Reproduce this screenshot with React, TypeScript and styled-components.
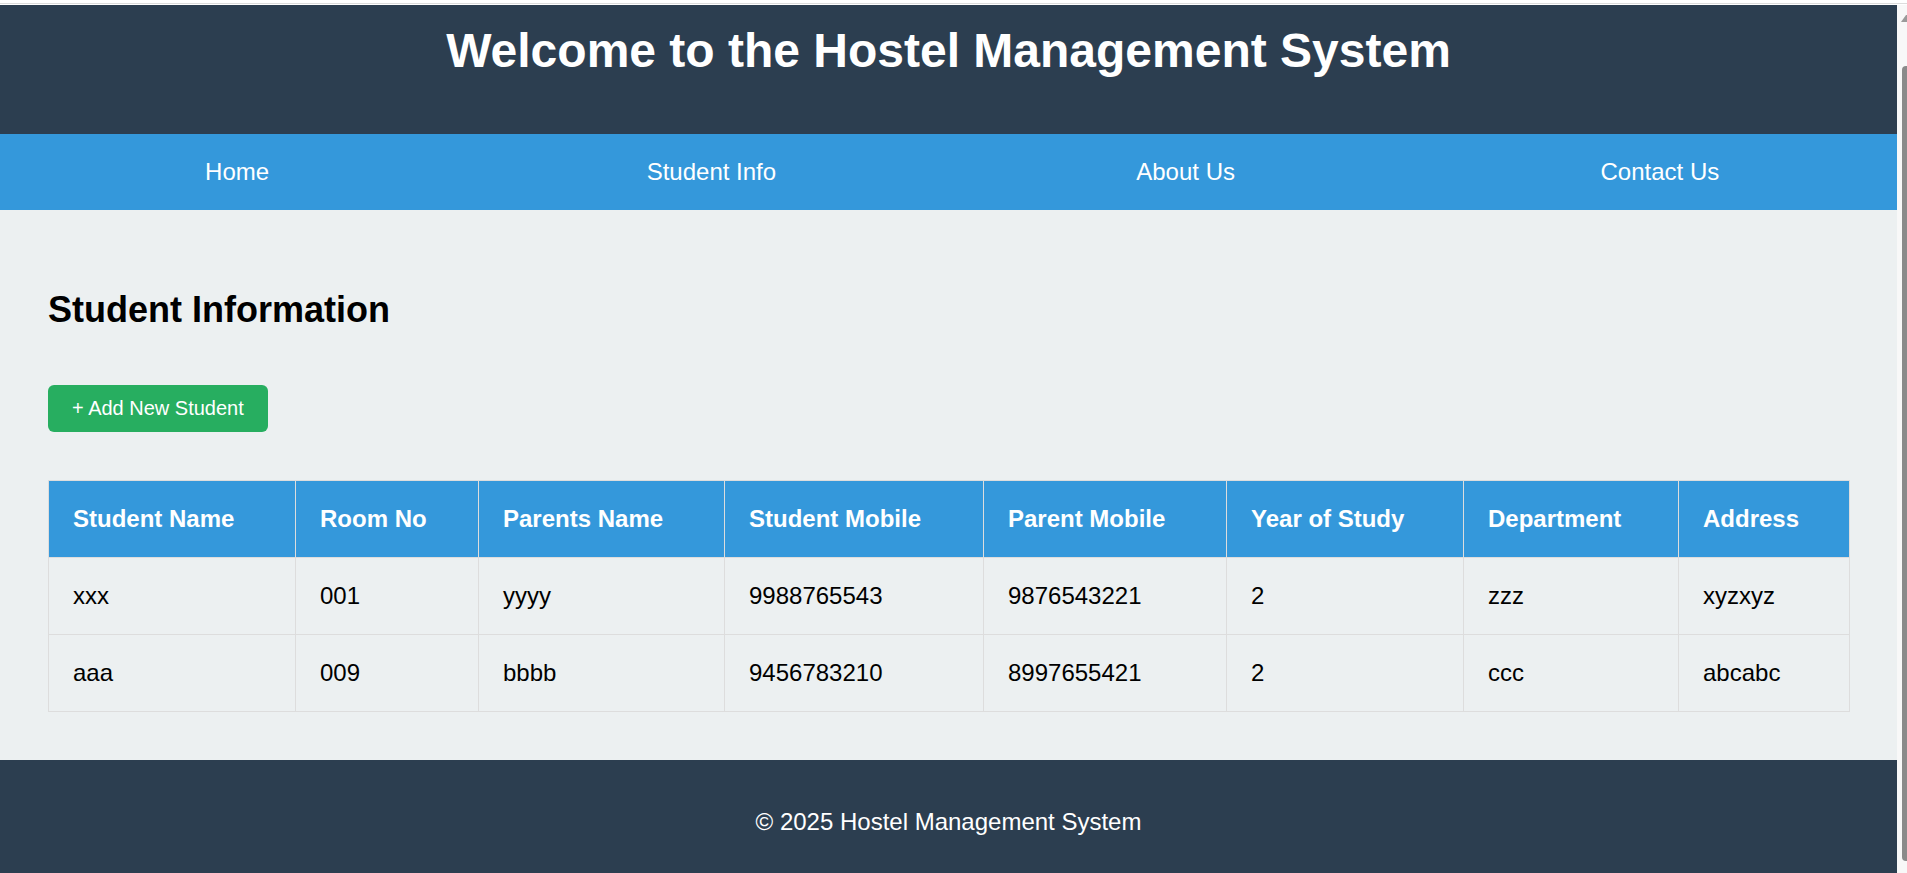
import React from "react";
import styled, { createGlobalStyle } from "styled-components";

const GlobalStyle = createGlobalStyle`
  *, *::before, *::after { box-sizing: border-box; }
  html, body { margin: 0; padding: 0; overflow: hidden; background: #ffffff; }
  body { font-family: "Liberation Sans", Arial, Helvetica, sans-serif; }
`;

const Viewport = styled.div`
  display: flex;
  flex-direction: column;
  height: 100vh;
  overflow: hidden;
  background: #ffffff;
`;

const TopEdge = styled.div`
  flex-shrink: 0;
  height: 1px;
  margin: 3px 0 1px;
  background: #dcdcdc;
`;

const Frame = styled.div`
  flex: 1;
  min-height: 0;
  display: flex;
`;

const Page = styled.div`
  flex: 1;
  min-width: 0;
  overflow: hidden;
  display: flex;
  flex-direction: column;
  background: #ecf0f1;
`;

const Header = styled.header`
  background: #2c3e50;
  padding: 18px 0 56px;
  text-align: center;
`;

const Title = styled.h1`
  margin: 0;
  color: #ffffff;
  font-size: 48px;
  font-weight: 700;
  line-height: normal;
`;

const Nav = styled.nav`
  display: flex;
  background: #3498db;
`;

const NavLink = styled.a`
  flex: 1;
  padding: 24px 0;
  text-align: center;
  color: #ffffff;
  font-size: 24px;
  line-height: normal;
  text-decoration: none;
  cursor: pointer;
`;

const Main = styled.main`
  padding: 79px 48px 48px;
  display: flex;
  flex-direction: column;
  align-items: flex-start;
`;

const SectionTitle = styled.h2`
  margin: 0;
  color: #000000;
  font-size: 36px;
  font-weight: 700;
  line-height: normal;
`;

const AddButton = styled.button`
  margin-top: 54px;
  padding: 12px 24px;
  border: none;
  border-radius: 6px;
  background: #27ae60;
  color: #ffffff;
  font-family: "Liberation Sans", Arial, sans-serif;
  font-size: 20px;
  line-height: normal;
  cursor: pointer;
`;

const Table = styled.table`
  margin-top: 48px;
  width: 100%;
  table-layout: fixed;
  border-collapse: collapse;
`;

const Col = styled.col<{ $width: number }>`
  width: ${(p) => p.$width}px;
`;

const HeadCell = styled.th`
  padding: 24px;
  border: 1px solid #dddddd;
  background: #3498db;
  color: #ffffff;
  font-size: 24px;
  font-weight: 700;
  line-height: normal;
  text-align: left;
  white-space: nowrap;
`;

const Cell = styled.td`
  padding: 24px;
  border: 1px solid #dddddd;
  color: #000000;
  font-size: 24px;
  line-height: normal;
  text-align: left;
  white-space: nowrap;
`;

const Footer = styled.footer`
  background: #2c3e50;
  padding: 48px 0;
  text-align: center;
  color: #ffffff;
  font-size: 24px;
  line-height: normal;
`;

const ScrollTrack = styled.div`
  width: 10px;
  flex-shrink: 0;
  display: flex;
  flex-direction: column;
  align-items: stretch;
  padding: 10px 0 0 4px;
  background: #f8f8f8;
`;

const ArrowIcon = styled.svg`
  display: block;
  flex-shrink: 0;
`;

const Thumb = styled.div`
  flex: 1;
  margin: 44px 0 12px 0.5px;
  background: #8a8a8a;
  border-radius: 4px 0 0 4px;
`;

const columns = [
  { label: "Student Name", width: 247 },
  { label: "Room No", width: 183 },
  { label: "Parents Name", width: 246 },
  { label: "Student Mobile", width: 259 },
  { label: "Parent Mobile", width: 243 },
  { label: "Year of Study", width: 237 },
  { label: "Department", width: 215 },
  { label: "Address", width: 171 },
];

const students = [
  ["xxx", "001", "yyyy", "9988765543", "9876543221", "2", "zzz", "xyzxyz"],
  ["aaa", "009", "bbbb", "9456783210", "8997655421", "2", "ccc", "abcabc"],
];

const navItems = ["Home", "Student Info", "About Us", "Contact Us"];

export default function App() {
  return (
    <>
      <GlobalStyle />
      <Viewport>
        <TopEdge />
        <Frame>
          <Page>
            <Header>
              <Title>Welcome to the Hostel Management System</Title>
            </Header>
            <Nav>
              {navItems.map((item) => (
                <NavLink key={item}>{item}</NavLink>
              ))}
            </Nav>
            <Main>
              <SectionTitle>Student Information</SectionTitle>
              <AddButton>+ Add New Student</AddButton>
              <Table>
                <colgroup>
                  {columns.map((c) => (
                    <Col key={c.label} $width={c.width} />
                  ))}
                </colgroup>
                <thead>
                  <tr>
                    {columns.map((c) => (
                      <HeadCell key={c.label}>{c.label}</HeadCell>
                    ))}
                  </tr>
                </thead>
                <tbody>
                  {students.map((row, i) => (
                    <tr key={i}>
                      {row.map((v, j) => (
                        <Cell key={j}>{v}</Cell>
                      ))}
                    </tr>
                  ))}
                </tbody>
              </Table>
            </Main>
            <Footer>© 2025 Hostel Management System</Footer>
          </Page>
          <ScrollTrack>
            <ArrowIcon width="6" height="7" viewBox="0 0 6 7">
              <polygon points="0,7 5,0 6,0 6,7" fill="#9a9a9a" />
            </ArrowIcon>
            <Thumb />
          </ScrollTrack>
        </Frame>
      </Viewport>
    </>
  );
}
